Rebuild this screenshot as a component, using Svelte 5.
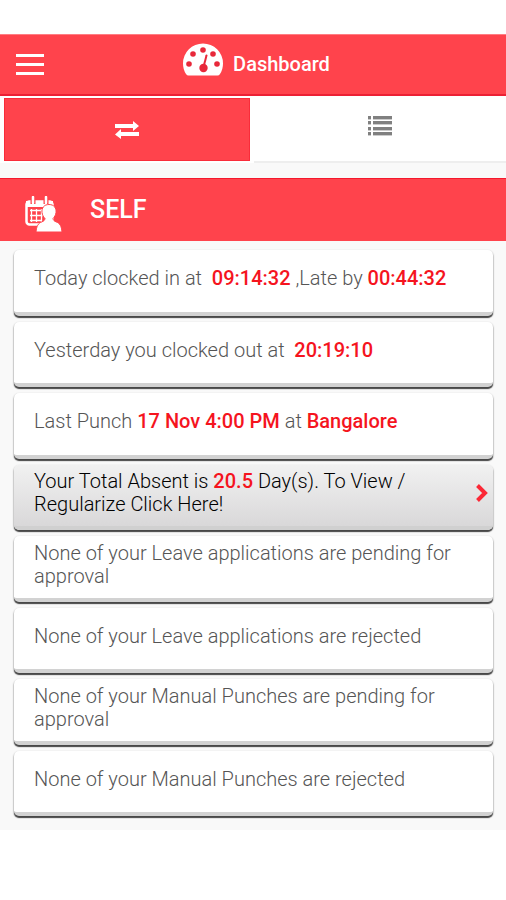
<script>
	let activeTab = 'punches';

	const notices = [
		{
			parts: [
				{ text: 'Today clocked in at \u00a0' },
				{ text: '09:14:32', strong: true },
				{ text: ' ,Late by ' },
				{ text: '00:44:32', strong: true }
			]
		},
		{
			parts: [
				{ text: 'Yesterday you clocked out at \u00a0' },
				{ text: '20:19:10', strong: true }
			]
		},
		{
			parts: [
				{ text: 'Last Punch ' },
				{ text: '17 Nov 4:00 PM', strong: true },
				{ text: ' at ' },
				{ text: 'Bangalore', strong: true }
			]
		},
		{
			action: true,
			parts: [
				{ text: 'Your Total Absent is ' },
				{ text: '20.5', strong: true },
				{ text: ' Day(s). To View / Regularize Click Here!' }
			]
		},
		{ parts: [{ text: 'None of your Leave applications are pending for approval' }] },
		{ parts: [{ text: 'None of your Leave applications are rejected' }] },
		{ parts: [{ text: 'None of your Manual Punches are pending for approval' }] },
		{ parts: [{ text: 'None of your Manual Punches are rejected' }] }
	];
</script>

<div class="page">
	<header class="topbar">
		<button type="button" class="menu" aria-label="Menu">
			<svg width="30" height="22" viewBox="0 0 30 22" fill="#fff">
				<rect x="1" y="0" width="28" height="3" />
				<rect x="1" y="9" width="28" height="3" />
				<rect x="1" y="18" width="28" height="3" />
			</svg>
		</button>
		<h1 class="title">
			<svg class="gauge" width="42" height="34" viewBox="0 0 42 34">
				<path
					d="M4 31Q1 26.500 1 20.500a20 20 0 0 1 40 0q0 6-3 10.500Q37 32.500 35.500 32.500h-29Q5 32.500 4 31z"
					fill="#fff"
				/>
				<g fill="#e8283a">
					<circle cx="7" cy="21" r="2.800" />
					<circle cx="11" cy="11" r="2.800" />
					<circle cx="21" cy="7" r="2.800" />
					<circle cx="31" cy="11" r="2.800" />
					<circle cx="35" cy="21" r="2.800" />
					<circle cx="21.500" cy="25" r="4.200" />
				</g>
				<path d="M21.500 24L24.500 12.500" stroke="#e8283a" stroke-width="2" stroke-linecap="round" />
			</svg>
			Dashboard
		</h1>
	</header>

	<nav class="tabs">
		<button
			type="button"
			class="tab"
			class:active={activeTab === 'punches'}
			aria-label="Punches"
			on:click={() => (activeTab = 'punches')}
		>
			<svg width="26" height="20" viewBox="0 0 26 20" fill="currentColor">
				<path d="M1 4h18V1l6 5-6 5V8H1z" />
				<path d="M25 12H7V9l-6 5.500L7 19v-3h18z" />
			</svg>
		</button>
		<button
			type="button"
			class="tab"
			class:active={activeTab === 'list'}
			aria-label="List"
			on:click={() => (activeTab = 'list')}
		>
			<svg class="list-icon" width="24" height="20" viewBox="0 0 24 20" fill="currentColor">
				{#each [0, 5, 11, 16] as y}
					<rect x="0" {y} width="3" height="3.400" />
					<rect x="5" {y} width="19" height="3.400" />
				{/each}
			</svg>
		</button>
	</nav>

	<main class="content">
		<h2 class="section">
			<svg width="38" height="38" viewBox="0 0 38 38">
				<rect x="2.500" y="5.500" width="26" height="23" rx="3" fill="none" stroke="#fff" stroke-width="2.500" />
				<path d="M2 5h27v6H2z" fill="#fff" />
				<path d="M9 1v7M22 1v7" stroke="#ff434c" stroke-width="5" />
				<path d="M9 1v6M22 1v6" stroke="#fff" stroke-width="2.500" stroke-linecap="round" />
				<path
					d="M6 14.500h17M6 19.500h14M6 24.500h12M7.500 13v13M12.500 13v13M17.500 13v13"
					stroke="#fff"
					stroke-width="1.300"
				/>
				<path
					d="M25 8.500c-5 0-7.500 3.500-7 8 .3 2.500 1.500 4.500 3 6-.2 1.500-1 2.500-3 3.300-4 1.500-5.500 4.500-6 10.200h26c-.5-5.700-2-8.700-6-10.200-2-.8-2.800-1.800-3-3.300 1.500-1.500 2.700-3.500 3-6 .5-4.500-2-8-7-8z"
					fill="#fff"
					stroke="#ff434c"
					stroke-width="1"
				/>
			</svg>
			SELF
		</h2>

		<ul class="notices">
			{#each notices as notice}
				<li>
					<svelte:element
						this={notice.action ? 'button' : 'div'}
						type={notice.action ? 'button' : undefined}
						class="card"
						class:action={notice.action}
					>
						<p>
							{#each notice.parts as part}{#if part.strong}<strong>{part.text}</strong>{:else}{part.text}{/if}{/each}
						</p>
						{#if notice.action}
							<svg class="chevron" width="12" height="18" viewBox="0 0 12 18">
								<path d="M1.500 1.500L9 9l-7.500 7.500" fill="none" stroke="#fb2836" stroke-width="4" />
							</svg>
						{/if}
					</svelte:element>
				</li>
			{/each}
		</ul>
	</main>
</div>

<style>
	:global(body) {
		margin: 0;
		background: #fff;
	}

	.page {
		display: flex;
		flex-direction: column;
		box-sizing: border-box;
		min-height: 100vh;
		padding: 34px 0 70px;
		font-family: Roboto, 'Liberation Sans', sans-serif;
	}

	button {
		border: 0;
		margin: 0;
		padding: 0;
		background: none;
		font: inherit;
		text-align: left;
		cursor: pointer;
	}

	svg {
		display: block;
		flex: none;
	}

	.topbar {
		display: grid;
		grid-template-columns: 60px 1fr 54px;
		align-items: center;
		box-sizing: border-box;
		height: 62px;
		background: #ff434c;
		border-top: 1px solid #ff7d82;
		border-bottom: 2px solid #ec2034;
	}

	.menu {
		padding-left: 15px;
	}

	.title {
		display: flex;
		align-items: center;
		justify-content: center;
		gap: 9px;
		margin: 0;
		padding-bottom: 2px;
		color: #fff;
		font-size: 20px;
		font-weight: 500;
		line-height: 24px;
	}

	.gauge {
		margin-bottom: 8px;
	}

	.tabs {
		display: grid;
		grid-template-columns: 49fr 50fr;
		gap: 4px;
		padding: 2px 0 0 4px;
	}

	.tab {
		display: flex;
		align-items: center;
		justify-content: center;
		box-sizing: border-box;
		height: 65px;
		color: #808080;
		border-bottom: 2px solid #eee;
	}

	.tab.active {
		color: #fff;
		background: #ff434c;
		background-clip: padding-box;
		border-bottom-color: #fff;
		box-shadow: inset 0 0 0 1px #f92c3a;
	}

	.list-icon {
		margin-bottom: 8px;
	}

	.content {
		display: flex;
		flex: 1;
		flex-direction: column;
		padding-top: 15px;
		background: #f9f9f9;
	}

	.section {
		display: flex;
		align-items: center;
		gap: 28px;
		box-sizing: border-box;
		height: 63px;
		margin: 0;
		padding-left: 24px;
		color: #fff;
		background: #ff434c;
		border-top: 1px solid #f5182d;
		font-size: 25px;
		font-weight: 500;
		line-height: 30px;
	}

	.section svg {
		margin-top: 10px;
	}

	.notices {
		display: grid;
		flex: 1;
		grid-auto-rows: 1fr;
		gap: 6px;
		margin: 0;
		padding: 9px 13px 14px 14px;
		list-style: none;
	}

	.notices li {
		display: flex;
	}

	.card {
		display: flex;
		flex: 1;
		align-items: center;
		justify-content: space-between;
		gap: 12px;
		box-sizing: border-box;
		padding: 0 5px 4px 20px;
		color: #555;
		background: #fff;
		border-bottom: 4px solid #d2d2d2;
		border-radius: 5px;
		box-shadow:
			0 2px 1px #484848,
			0 1px 2px #8c8c8c;
	}

	.card.action {
		color: #000;
		background: linear-gradient(#f1f1f1, #d9d8d9);
		border-bottom-color: #d0d0d0;
	}

	.card p {
		max-width: 430px;
		margin: 0;
		font-size: 20px;
		font-weight: 300;
		line-height: 23px;
	}

	.card strong {
		color: #f5141e;
		font-weight: 500;
	}
</style>
